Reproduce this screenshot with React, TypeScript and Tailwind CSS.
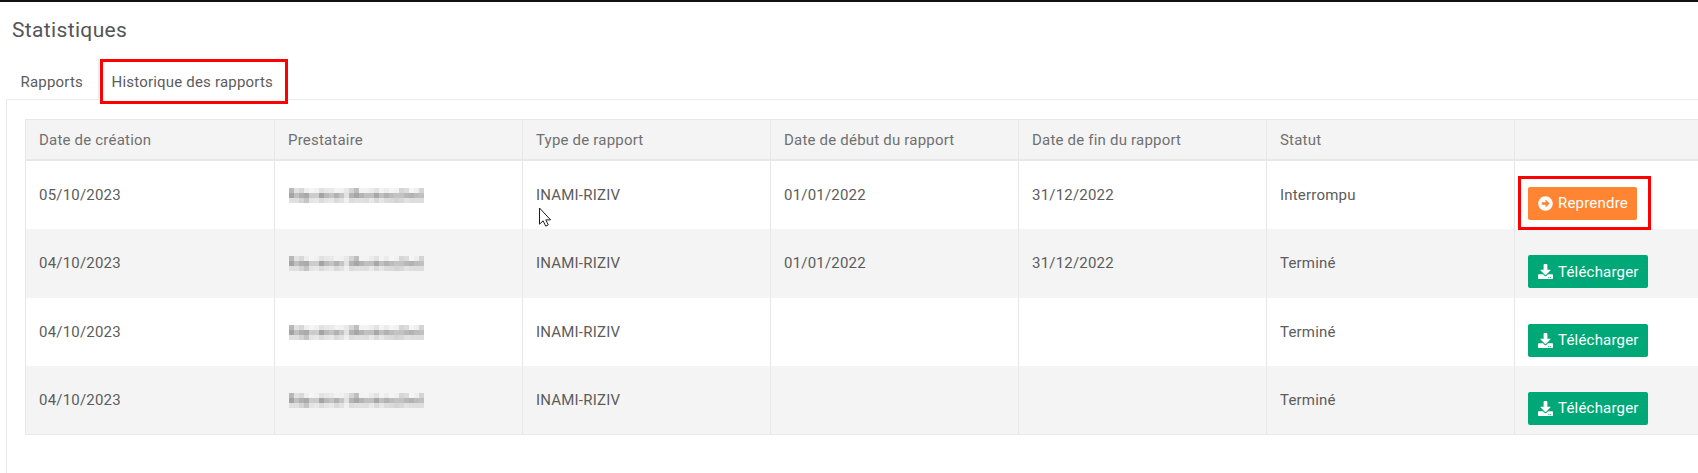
import { FaArrowAltCircleRight, FaDownload } from "react-icons/fa";
import { clsx } from "clsx";

type Report = {
	createdAt: string;
	type: string;
	start?: string;
	end?: string;
	status: "Interrompu" | "Terminé";
};

const columns = [
	"Date de création",
	"Prestataire",
	"Type de rapport",
	"Date de début du rapport",
	"Date de fin du rapport",
	"Statut",
	"",
];

const reports: Report[] = [
	{ createdAt: "05/10/2023", type: "INAMI-RIZIV", start: "01/01/2022", end: "31/12/2022", status: "Interrompu" },
	{ createdAt: "04/10/2023", type: "INAMI-RIZIV", start: "01/01/2022", end: "31/12/2022", status: "Terminé" },
	{ createdAt: "04/10/2023", type: "INAMI-RIZIV", status: "Terminé" },
	{ createdAt: "04/10/2023", type: "INAMI-RIZIV", status: "Terminé" },
];

// grey levels of the pixelated provider name, one line per row of blocks
const mosaic = [
	[184, 226, 216, 238, 245, 241, 226, 232, 234, 243, 241, 232, 212, 190, 243, 243, 236, 226, 243, 236, 245, 241, 214, 220, 245, 238, 212],
	[164, 192, 176, 170, 204, 204, 164, 186, 196, 178, 196, 226, 180, 166, 180, 192, 192, 168, 192, 178, 188, 196, 194, 184, 178, 188, 192],
	[224, 224, 212, 196, 228, 232, 220, 228, 232, 218, 226, 240, 220, 224, 224, 222, 232, 218, 230, 220, 218, 212, 216, 226, 222, 222, 222],
];

function HiddenName() {
	return (
		<svg width="135" height="15" shapeRendering="crispEdges" className="block">
			{mosaic.map((line, y) =>
				line.map((v, x) => (
					<rect key={`${x}-${y}`} x={x * 5} y={y * 5} width="5" height="5" fill={`rgb(${v},${v},${v})`} />
				)),
			)}
		</svg>
	);
}

function Cursor() {
	return (
		<svg width="14" height="21" viewBox="0 0 14 21" className="absolute left-[539px] top-[207px]">
			<path d="M.5 1v16.2l3.6-3.4 2.6 5.3 2.6-1.2-2.5-5h4.8z" fill="#fff" stroke="#1c1c28" />
		</svg>
	);
}

function ActionButton({ status }: { status: Report["status"] }) {
	const stopped = status === "Interrompu";
	const Icon = stopped ? FaArrowAltCircleRight : FaDownload;
	return (
		<button
			className={clsx(
				"flex h-[33px] items-center gap-[5px] rounded-[2px] pl-[10px] text-white",
				stopped ? "w-[109px] bg-[#ff8532]" : "w-[120px] bg-[#00a877]",
			)}
		>
			<Icon className="size-[15px]" />
			<span>{stopped ? "Reprendre" : "Télécharger"}</span>
		</button>
	);
}

const cell = "border-l border-[#e7e7e7] pl-[13px]";
const grid = "grid grid-cols-[249px_248px_248px_248px_248px_248px_184px]";

export default function App() {
	return (
		<div className="relative h-[473px] w-[1698px] overflow-hidden bg-white font-[Roboto,sans-serif] text-[15px] tracking-[0.2px] text-[#5c5c5c]">
			<div className="h-[2px] bg-[#111]" />
			<h1 className="mt-[13px] ml-[12px] h-[44px] text-[21px] leading-[30px] tracking-[0.35px] text-[#555]">Statistiques</h1>
			<nav className="ml-[6px] flex h-[41px]">
				<div className="w-[92px] border-b border-[#ebebeb] pt-[12px] pl-[14.5px] leading-[22px]">Rapports</div>
				<div className="w-[190px] border-l border-[#ebebeb] pt-[12px] pl-[12.5px] leading-[22px]">Historique des rapports</div>
				<div className="flex-1 border-b border-[#ebebeb]" />
			</nav>
			<main className="ml-[6px] h-[373px] border-l border-[#ebebeb] pt-[19px] pl-[18px]">
				<div className={clsx(grid, "h-[42px] border-t border-b-2 border-[#e7e7e7] bg-[#f4f4f4] text-[#707070]")}>
					{columns.map((c, i) => (
						<div key={i} className={clsx(cell, "pt-[10px] leading-[20px]")}>{c}</div>
					))}
				</div>
				<div className="border-b border-[#e9e9e9]">
					{reports.map((r, i) => (
						<div key={i} className={clsx(grid, "h-[68.25px]", i % 2 === 1 && "bg-[#f4f4f4]")}>
							<div className={clsx(cell, "pt-[24px] leading-[20px]")}>{r.createdAt}</div>
							<div className={clsx(cell, "pt-[27px] pl-[14px]")}>
								<HiddenName />
							</div>
							<div className={clsx(cell, "pt-[24px] leading-[20px]")}>{r.type}</div>
							<div className={clsx(cell, "pt-[24px] leading-[20px]")}>{r.start}</div>
							<div className={clsx(cell, "pt-[24px] leading-[20px]")}>{r.end}</div>
							<div className={clsx(cell, "pt-[24px] leading-[20px]")}>{r.status}</div>
							<div className={clsx(cell, "pt-[26px]")}>
								<ActionButton status={r.status} />
							</div>
						</div>
					))}
				</div>
			</main>
			<div className="absolute left-[100px] top-[59px] h-[45px] w-[188px] border-[3px] border-[#fe0000]" />
			<div className="absolute left-[1518px] top-[176px] h-[54px] w-[133px] border-[3px] border-[#fe0000]" />
			<Cursor />
		</div>
	);
}
